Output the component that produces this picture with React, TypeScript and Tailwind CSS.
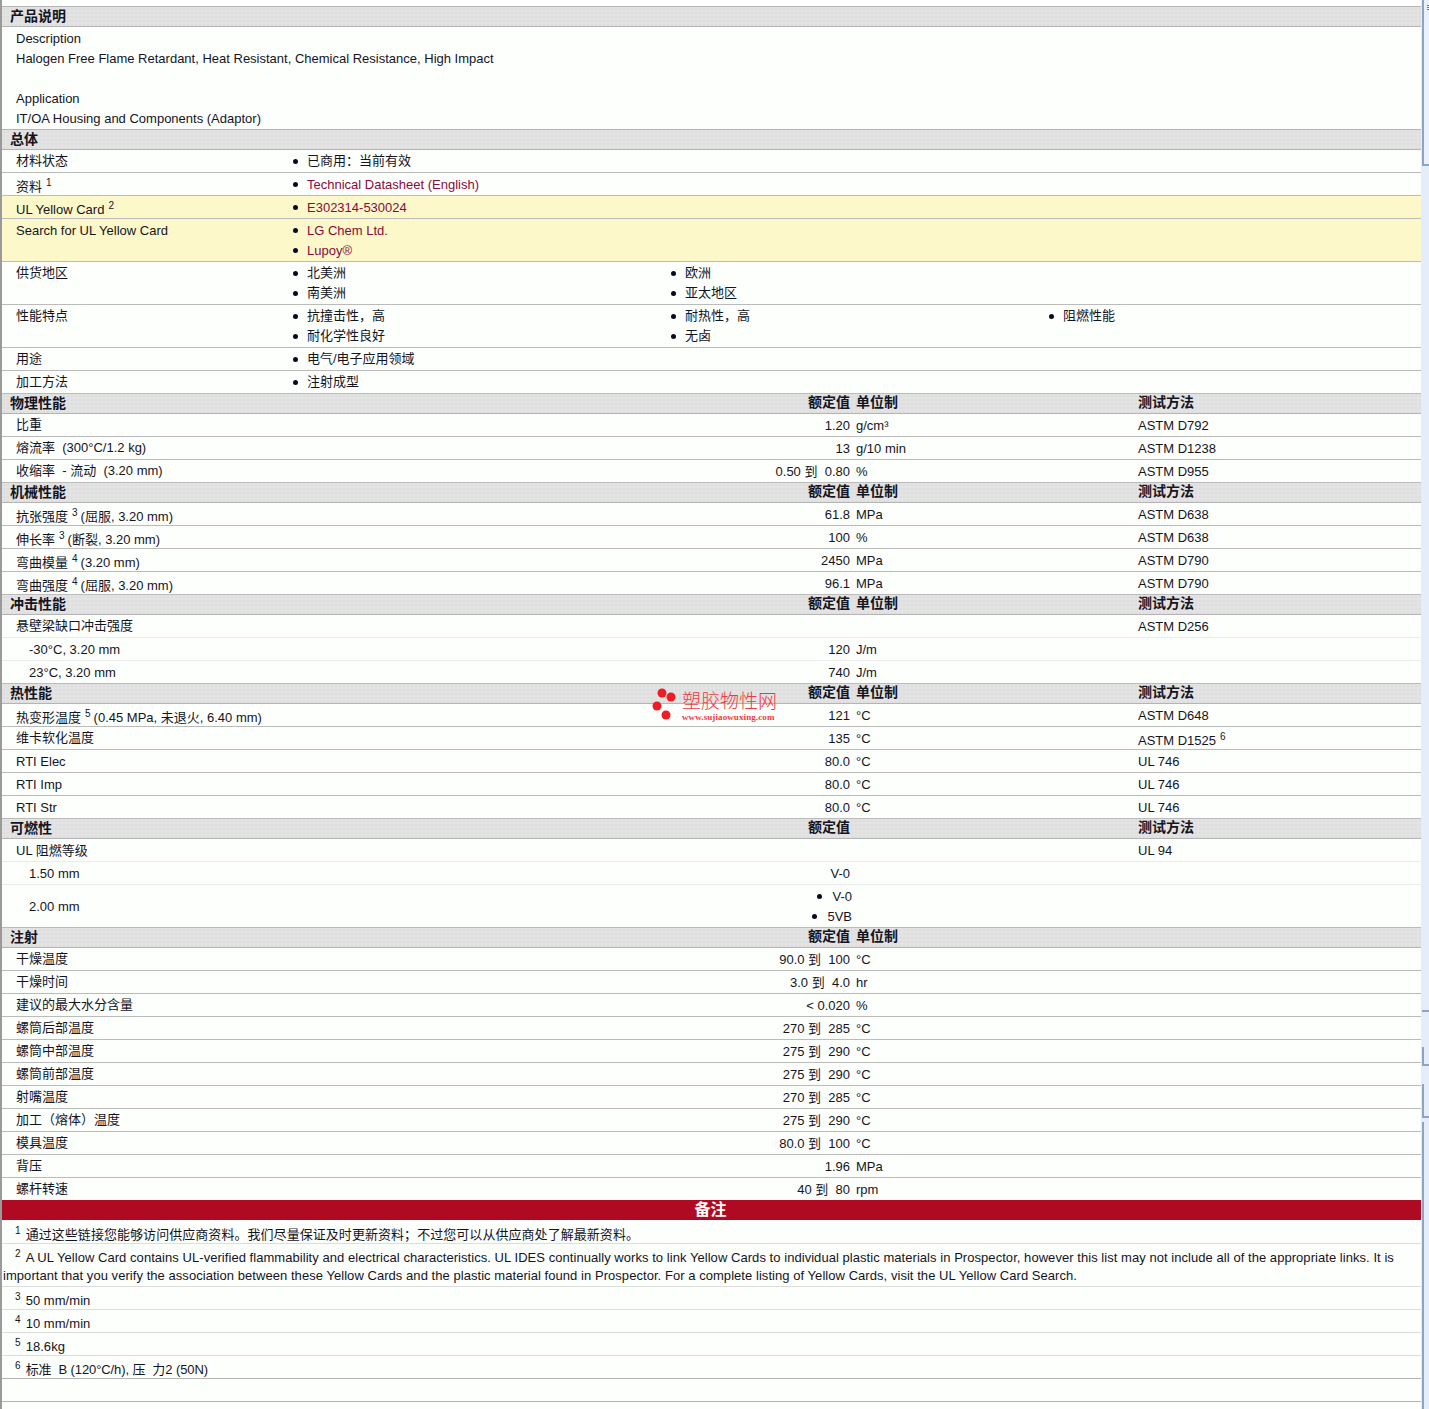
import type { ReactNode } from 'react';

const dots = 'bg-[#e3e3e3] bg-[radial-gradient(#dddddd_1px,transparent_1px)] bg-[length:4px_4px]';

const isLatin = (label: ReactNode) => typeof label === 'string' && /^[\x00-\x7f]/.test(label);

function Sup({ n, tail }: { n: number; tail?: boolean }) {
  return <sup className={`text-[10px] ml-[4px] ${tail ? 'mr-[3px]' : ''}`}>{n}</sup>;
}

function Section({ title, value, unit, test }: { title: string; value?: string; unit?: string; test?: string }) {
  return (
    <div className={`h-5 flex border-b border-[#b4b4b4] font-bold text-[14px] leading-[18px] ${dots}`}>
      <div className="w-[848px] flex justify-between pl-2">
        <span>{title}</span>
        <span className="-mt-px">{value}</span>
      </div>
      <div className="w-[288px] pl-[6px] -mt-px">{unit}</div>
      <div className="-mt-px">{test}</div>
    </div>
  );
}

function Bullet({ children, link }: { children: ReactNode; link?: boolean }) {
  return (
    <div className="flex items-center h-5">
      <span className="w-[5px] h-[5px] rounded-full bg-[#0a0a20] ml-[15px] mr-[9px] shrink-0" />
      <span className={link ? 'text-[#870b3c] pt-[2px]' : ''}>{children}</span>
    </div>
  );
}

function ListRow({ label, cols, tall, yellow, shift }: {
  label: ReactNode;
  cols: ReactNode[][];
  tall?: boolean;
  yellow?: boolean;
  shift?: boolean;
}) {
  return (
    <div className={`flex border-b border-[#bbbbbb] pt-px ${tall ? 'h-[43px]' : 'h-[23px]'} ${yellow ? 'bg-[#fdf8c9]' : ''}`}>
      <div className={`w-[276px] pl-[14px] leading-5 ${shift ? 'pt-[3px]' : isLatin(label) ? 'pt-px' : ''}`}>{label}</div>
      {cols.map((c, i) => (
        <div key={i} className="w-[378px]">
          {c.map((b, j) => (
            <div key={j}>{b}</div>
          ))}
        </div>
      ))}
    </div>
  );
}

function Row({ label, value, unit, test, light, indent, shift, testShift, short }: {
  label: ReactNode;
  value?: ReactNode;
  unit?: string;
  test?: ReactNode;
  light?: boolean;
  indent?: boolean;
  shift?: boolean;
  testShift?: boolean;
  short?: boolean;
}) {
  return (
    <div className={`flex pt-px leading-5 ${short ? 'h-[22px]' : 'h-[23px] border-b'} ${light ? 'border-[#ececec]' : 'border-[#bbbbbb]'}`}>
      <div className="w-[848px] flex justify-between whitespace-pre">
        <span className={`${indent ? 'pl-[27px]' : 'pl-[14px]'} ${shift ? 'pt-[3px]' : isLatin(label) ? 'pt-px' : ''}`}>{label}</span>
        <span className="pt-px">{value}</span>
      </div>
      <div className="w-[288px] pl-[6px] pt-px">{unit}</div>
      <div className={testShift ? 'pt-[3px]' : 'pt-px'}>{test}</div>
    </div>
  );
}

function Note({ n, children, tall, first, strong }: { n?: number; children?: ReactNode; tall?: boolean; first?: boolean; strong?: boolean }) {
  return (
    <div className={`border-b pl-px leading-[18px] indent-[12px] tracking-[0.05px] ${strong ? 'border-[#b4b4b4]' : 'border-[#dddddd]'} ${tall ? 'h-[43px] pt-[5px]' : first ? 'h-6 pt-[6px]' : 'h-[23px] pt-[5px]'}`}>
      {n ? <sup className="text-[10px] mr-[5px]">{n}</sup> : null}
      {children}
    </div>
  );
}

function Watermark() {
  return (
    <div className="absolute left-[652px] top-[688px] flex gap-[4px] pointer-events-none">
      <svg width="26" height="34" viewBox="0 0 26 34">
        <circle cx="10" cy="5" r="4.5" fill="#ee1c25" />
        <circle cx="19" cy="9" r="4.5" fill="#ee1c25" />
        <circle cx="5" cy="18" r="4.5" fill="#ee1c25" />
        <circle cx="14" cy="27" r="4.5" fill="#ee1c25" />
      </svg>
      <div className="flex flex-col text-[#ee3a45] pt-[3px]">
        <span className="text-[19px] leading-[21px] font-light">塑胶物性网</span>
        <span className="text-[9px] leading-[10px] font-bold tracking-[0.1px] font-['Liberation_Serif',serif]">www.sujiaowuxing.com</span>
      </div>
    </div>
  );
}

function ScrollStrip() {
  return (
    <div className="w-2 h-[1409px] shrink-0 bg-[#e5edfb] flex flex-col">
      <div className="h-[166px] ml-px border-l-2 border-b-2 border-[#8fa3c2] bg-[#eaf1fd] pt-[5px] flex flex-col gap-px items-end">
        <div className="w-[2px] h-px bg-[#777777]" />
        <div className="w-[2px] h-px bg-[#777777]" />
        <div className="w-[2px] h-px bg-[#777777]" />
      </div>
      <div className="h-[844px]" />
      <div className="h-[2px] ml-px bg-[#8fa3c2]" />
      <div className="h-[35px]" />
      <div className="h-[19px] ml-px border-l-2 border-b-2 border-[#8fa3c2]" />
      <div className="h-[18px]" />
      <div className="h-[34px] ml-px border-l-2 border-b-2 border-[#8fa3c2]" />
      <div className="h-[4px]" />
      <div className="flex-1 ml-px border-l-2 border-[#8fa3c2]" />
    </div>
  );
}

export default function App() {
  return (
    <div className="relative flex h-[1409px] overflow-hidden bg-[#fdfffd] text-[13px] text-[#14141e] font-['Liberation_Sans','Noto_Sans_CJK_SC',sans-serif]">
      <div className="w-[2px] shrink-0 bg-[#9a9a9a]" />
      <div className="w-[1419px] shrink-0">
        <div className="h-[7px] border-b border-[#b4b4b4]" />
        <Section title="产品说明" />
        <div className="h-[103px] border-b border-[#b4b4b4] pl-[14px] pt-[2px] leading-5">
          <div>Description</div>
          <div>Halogen Free Flame Retardant, Heat Resistant, Chemical Resistance, High Impact</div>
          <div className="h-5" />
          <div>Application</div>
          <div>IT/OA Housing and Components (Adaptor)</div>
        </div>
        <Section title="总体" />
        <ListRow label="材料状态" cols={[[<Bullet>已商用：当前有效</Bullet>]]} />
        <ListRow shift label={<>资料<Sup n={1} /></>} cols={[[<Bullet link>Technical Datasheet (English)</Bullet>]]} />
        <ListRow yellow shift label={<>UL Yellow Card<Sup n={2} /></>} cols={[[<Bullet link>E302314-530024</Bullet>]]} />
        <ListRow yellow tall label="Search for UL Yellow Card" cols={[[<Bullet link>LG Chem Ltd.</Bullet>, <Bullet link>Lupoy®</Bullet>]]} />
        <ListRow tall label="供货地区" cols={[[<Bullet>北美洲</Bullet>, <Bullet>南美洲</Bullet>], [<Bullet>欧洲</Bullet>, <Bullet>亚太地区</Bullet>]]} />
        <ListRow tall label="性能特点" cols={[[<Bullet>抗撞击性，高</Bullet>, <Bullet>耐化学性良好</Bullet>], [<Bullet>耐热性，高</Bullet>, <Bullet>无卤</Bullet>], [<Bullet>阻燃性能</Bullet>]]} />
        <ListRow label="用途" cols={[[<Bullet>电气/电子应用领域</Bullet>]]} />
        <ListRow label="加工方法" cols={[[<Bullet>注射成型</Bullet>]]} />

        <Section title="物理性能" value="额定值" unit="单位制" test="测试方法" />
        <Row label="比重" value="1.20" unit="g/cm³" test="ASTM D792" />
        <Row label="熔流率  (300°C/1.2 kg)" value="13" unit="g/10 min" test="ASTM D1238" />
        <Row label="收缩率  - 流动  (3.20 mm)" value="0.50 到  0.80" unit="%" test="ASTM D955" />

        <Section title="机械性能" value="额定值" unit="单位制" test="测试方法" />
        <Row shift label={<>抗张强度<Sup tail n={3} />(屈服, 3.20 mm)</>} value="61.8" unit="MPa" test="ASTM D638" />
        <Row shift label={<>伸长率<Sup tail n={3} />(断裂, 3.20 mm)</>} value="100" unit="%" test="ASTM D638" />
        <Row shift label={<>弯曲模量<Sup tail n={4} />(3.20 mm)</>} value="2450" unit="MPa" test="ASTM D790" />
        <Row shift label={<>弯曲强度<Sup tail n={4} />(屈服, 3.20 mm)</>} value="96.1" unit="MPa" test="ASTM D790" />

        <Section title="冲击性能" value="额定值" unit="单位制" test="测试方法" />
        <Row light label="悬壁梁缺口冲击强度" test="ASTM D256" />
        <Row light indent label="-30°C, 3.20 mm" value="120" unit="J/m" />
        <Row indent label="23°C, 3.20 mm" value="740" unit="J/m" />

        <Section title="热性能" value="额定值" unit="单位制" test="测试方法" />
        <Row shift label={<>热变形温度<Sup tail n={5} />(0.45 MPa, 未退火, 6.40 mm)</>} value="121" unit="°C" test="ASTM D648" />
        <Row testShift label="维卡软化温度" value="135" unit="°C" test={<>ASTM D1525<Sup n={6} /></>} />
        <Row label="RTI Elec" value="80.0" unit="°C" test="UL 746" />
        <Row label="RTI Imp" value="80.0" unit="°C" test="UL 746" />
        <Row label="RTI Str" value="80.0" unit="°C" test="UL 746" />

        <Section title="可燃性" value="额定值" test="测试方法" />
        <Row light label="UL 阻燃等级" test="UL 94" />
        <Row light indent label="1.50 mm" value="V-0" />
        <div className="h-[43px] border-b border-[#bbbbbb] flex pt-px leading-5">
          <div className="w-[848px] flex justify-between items-center">
            <span className="pl-[27px]">2.00 mm</span>
            <div className="flex flex-col items-end -mr-[2px]">
              <div className="flex items-center h-5 gap-[10px]">
                <span className="w-[5px] h-[5px] rounded-full bg-[#0a0a20]" />V-0
              </div>
              <div className="flex items-center h-5 gap-[10px]">
                <span className="w-[5px] h-[5px] rounded-full bg-[#0a0a20]" />5VB
              </div>
            </div>
          </div>
        </div>

        <Section title="注射" value="额定值" unit="单位制" />
        <Row label="干燥温度" value="90.0 到  100" unit="°C" />
        <Row label="干燥时间" value="3.0 到  4.0" unit="hr" />
        <Row label="建议的最大水分含量" value="< 0.020" unit="%" />
        <Row label="螺筒后部温度" value="270 到  285" unit="°C" />
        <Row label="螺筒中部温度" value="275 到  290" unit="°C" />
        <Row label="螺筒前部温度" value="275 到  290" unit="°C" />
        <Row label="射嘴温度" value="270 到  285" unit="°C" />
        <Row label="加工（熔体）温度" value="275 到  290" unit="°C" />
        <Row label="模具温度" value="80.0 到  100" unit="°C" />
        <Row label="背压" value="1.96" unit="MPa" />
        <Row short label="螺杆转速" value="40 到  80" unit="rpm" />

        <div className="h-5 bg-[#b00a22] text-white text-center text-[16px] font-bold leading-[19px] pr-[2px]">备注</div>
        <Note first n={1}>通过这些链接您能够访问供应商资料。我们尽量保证及时更新资料；不过您可以从供应商处了解最新资料。</Note>
        <Note tall n={2}>
          A UL Yellow Card contains UL-verified flammability and electrical characteristics. UL IDES continually works to link Yellow Cards to individual plastic materials in Prospector, however this list may not include all of the appropriate links. It is
          <br />
          important that you verify the association between these Yellow Cards and the plastic material found in Prospector. For a complete listing of Yellow Cards, visit the UL Yellow Card Search.
        </Note>
        <Note n={3}>50 mm/min</Note>
        <Note n={4}>10 mm/min</Note>
        <Note n={5}>18.6kg</Note>
        <Note strong n={6}><span className="whitespace-pre tracking-[-0.1px]">标准  B (120°C/h), 压  力2 (50N)</span></Note>
        <Note strong />
      </div>
      <ScrollStrip />
      <Watermark />
    </div>
  );
}
